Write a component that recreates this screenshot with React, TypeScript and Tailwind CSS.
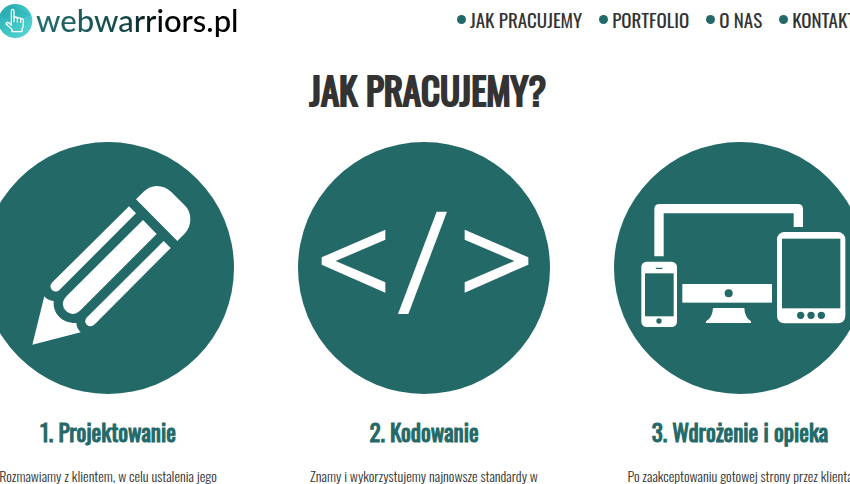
import type { ReactNode } from "react";

const navItems = [
  { label: "JAK PRACUJEMY", href: "#jak-pracujemy" },
  { label: "PORTFOLIO", href: "#portfolio" },
  { label: "O NAS", href: "#o-nas" },
  { label: "KONTAKT", href: "#kontakt" },
];

function HandLogo() {
  return (
    <svg viewBox="0 0 102 108" className="h-9 w-[34px] shrink-0" aria-hidden="true">
      <defs>
        <linearGradient id="badge" x1="0" y1="0" x2="1" y2="1">
          <stop offset="0" stopColor="#27a9ad" />
          <stop offset="0.5" stopColor="#3cc3c4" />
          <stop offset="1" stopColor="#5fd8d6" />
        </linearGradient>
      </defs>
      <circle cx="46" cy="57" r="51" fill="url(#badge)" />
      <path d="M0 38 34 8 92 38 40 64Z" fill="#1c9da3" opacity="0.25" />
      <path
        d="M34 68V27q0-5 4-5t4 5v23q0-5 5-5t5 5v2q0-5 5-5t5 5v2q0-4 4-4t4 5v13q0 7-4 13v8H36v-7L19 67q-2-5 3-6 3 0 6 3l6 6M42 50v9M52 52v8M62 54v7"
        fill="none"
        stroke="#fff"
        strokeWidth="4"
        strokeLinecap="round"
        strokeLinejoin="round"
      />
    </svg>
  );
}

function PencilIcon() {
  return (
    <svg viewBox="-54 36 756 756" className="size-[252px]" aria-hidden="true">
      <circle cx="324" cy="414" r="378" fill="#236968" />
      <g fill="#fff">
        <path d="M408 208 430 186Q448 168 470 168 496 168 514 186L554 226Q571 242 571 268 571 294 553 312L532 333Z" />
        <path d="M387 229 408 250 179 479Q168 490 156 480 146 468 157 457Z" />
        <path d="M429 270 470 312 242 540Q219 562 198 543 178 521 200 498Z" />
        <path d="M491 333 512 354 285 582Q272 595 260 584 251 573 261 562Z" />
        <path d="M133 499Q143 512 161 513C158 549 184 580 229 579Q230 595 242 607L97 644Z" />
      </g>
    </svg>
  );
}

function CodeIcon() {
  return (
    <svg viewBox="24 36 756 756" className="size-[252px]" aria-hidden="true">
      <circle cx="402" cy="414" r="378" fill="#236968" />
      <g fill="#fff">
        <path d="M286 299V329L137 393 286 457V488L95 404V382Z" />
        <path d="M440 245H471L355 552H324Z" />
        <path d="M524 299 715 382V404L524 488V457L673 393 524 329Z" />
      </g>
    </svg>
  );
}

function DevicesIcon() {
  return (
    <svg viewBox="42 36 756 756" className="size-[252px]" aria-hidden="true">
      <circle cx="420" cy="414" r="378" fill="#236968" />
      <g fill="#fff">
        <path d="M163 379V238Q163 222 179 222H593Q609 222 609 238V291H581V250H191V379Z" />
        <rect x="124" y="395" width="107" height="196" rx="16" />
        <rect x="247" y="462" width="269" height="56" />
        <path d="M339 534H433Q434 563 453 574V579H318V574Q338 562 339 534Z" />
        <rect x="531" y="306" width="205" height="274" rx="22" />
      </g>
      <g fill="#236968">
        <rect x="135" y="430" width="86" height="129" />
        <rect x="167" y="413" width="21" height="4" rx="2" />
        <circle cx="177" cy="573" r="8" />
        <circle cx="386" cy="490" r="12" />
        <rect x="546" y="326" width="175" height="209" />
        <circle cx="602" cy="556" r="11" />
        <circle cx="633" cy="556" r="11" />
        <circle cx="664" cy="556" r="11" />
      </g>
    </svg>
  );
}

function Step({ icon, title, children }: { icon: ReactNode; title: string; children: ReactNode }) {
  return (
    <article className="flex w-[316px] shrink-0 flex-col items-center whitespace-nowrap">
      {icon}
      <h2 className="mt-5 text-[23px] leading-9 font-normal text-[#236968] [-webkit-text-stroke:1px_#236968]">
        {title}
      </h2>
      <p className="mt-4 text-[14px] leading-5 font-light text-[#333]">{children}</p>
    </article>
  );
}

export default function App() {
  return (
    <div className="h-screen overflow-hidden bg-white font-['Oswald','Liberation_Sans_Narrow','Liberation_Sans',sans-serif] text-[#333]">
      <header className="flex h-10 items-center justify-between overflow-hidden whitespace-nowrap">
        <a href="#start" className="flex items-center gap-0.5">
          <HandLogo />
          <span className="bg-linear-to-r from-[#236f70] via-[#174648] via-45% to-black to-70% bg-clip-text font-['Lato',sans-serif] text-[31px] leading-10 font-medium text-transparent">
            webwarriors.pl
          </span>
        </a>
        <nav className="w-[393px] shrink-0 pb-0.5">
          <ul className="flex gap-[17px]">
            {navItems.map((item) => (
              <li key={item.label} className="shrink-0">
                <a href={item.href} className="flex items-center gap-1 text-[19px] leading-10">
                  <span className="size-[9px] rounded-full bg-[#236968]" />
                  {item.label}
                </a>
              </li>
            ))}
          </ul>
        </nav>
      </header>
      <main className="overflow-hidden pr-0.5">
        <h1 className="mt-[22px] pl-2 text-center text-[37px] leading-14 font-normal [-webkit-text-stroke:2px_#333]">
          JAK PRACUJEMY?
        </h1>
        <section className="mt-6 flex justify-center">
          <Step icon={<PencilIcon />} title="1. Projektowanie">
            Rozmawiamy z klientem, w celu ustalenia jego
          </Step>
          <Step icon={<CodeIcon />} title="2. Kodowanie">
            Znamy i wykorzystujemy najnowsze standardy w
          </Step>
          <Step icon={<DevicesIcon />} title="3. Wdrożenie i opieka">
            Po zaakceptowaniu gotowej strony przez klienta
          </Step>
        </section>
      </main>
    </div>
  );
}
